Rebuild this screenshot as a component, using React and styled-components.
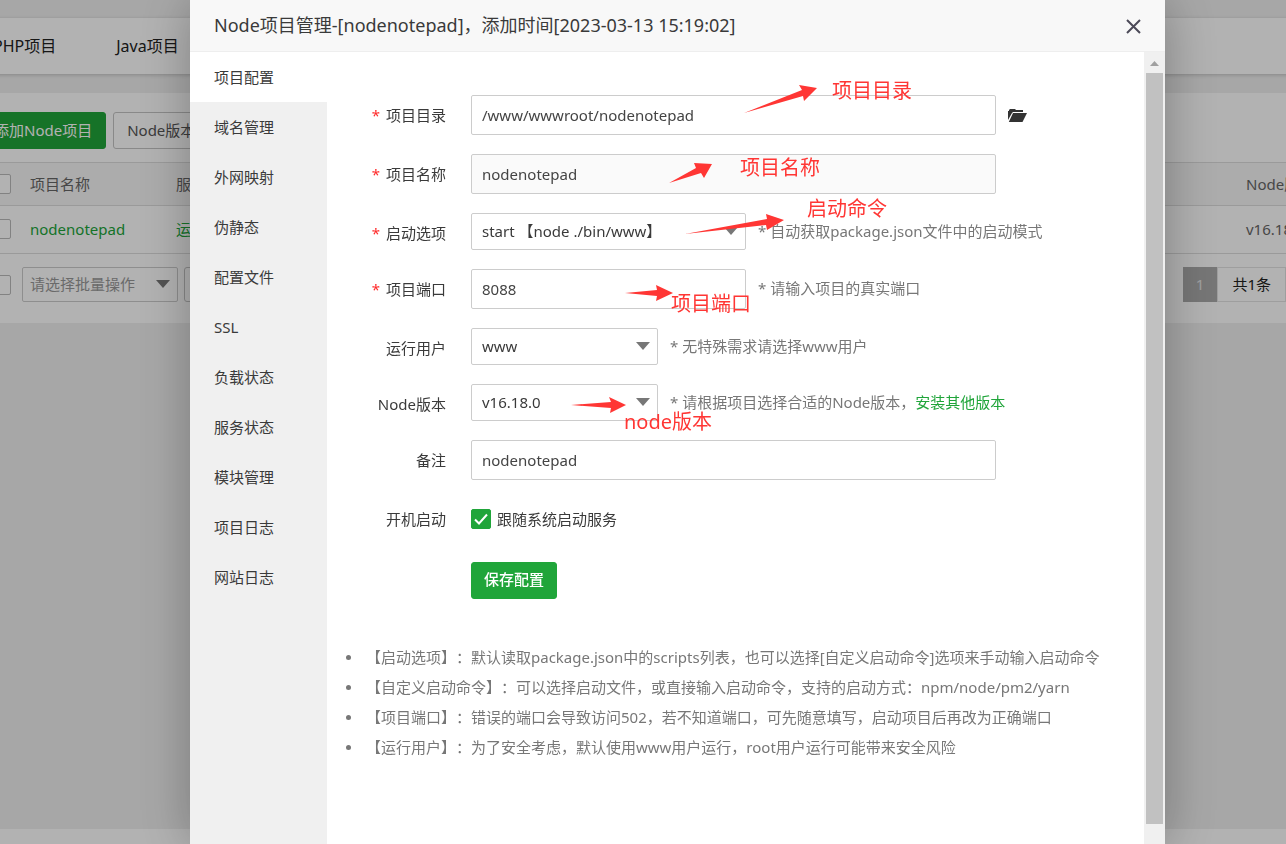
import React, { useState } from 'react';
import styled, { createGlobalStyle } from 'styled-components';

const GlobalStyle = createGlobalStyle`
    * {
        box-sizing: border-box;
    }
    body {
        margin: 0;
        background: #f0f0f0;
        font-family: "Noto Sans", "Noto Sans CJK SC", sans-serif;
        font-size: 15px;
        line-height: 20px;
        color: #3a3a3a;
        text-spacing-trim: space-all;
    }
    button, input, select {
        font: inherit;
        color: inherit;
    }
`;

/* ---------- page behind the dialog ---------- */

const Shell = styled.div`
    height: 100vh;
    overflow: hidden;
`;

const Page = styled.div`
    display: flex;
    flex-direction: column;
    height: 100%;
    margin: 0 -20px 0 -40px;
    padding-top: 18px;
`;

const Tabs = styled.nav`
    display: flex;
    flex-shrink: 0;
    align-items: center;
    gap: 60px;
    height: 56px;
    padding: 0 33px;
    background: #fff;
    box-shadow: 0 1px 4px rgba(0, 0, 0, .2);
    font-size: 16px;
    a {
        color: #222;
        text-decoration: none;
    }
`;

const Panel = styled.main`
    margin-top: 19px;
    padding: 19px 20px 21px;
    background: #fff;
`;

const Toolbar = styled.div`
    display: flex;
    gap: 7px;
    margin-bottom: 13px;
`;

const Button = styled.button`
    height: 37px;
    padding: 0 ${props => props.$strong ? 12 : 13}px 2px;
    border: 1px solid ${props => props.$primary ? '#20a53a' : '#c4c4c4'};
    border-radius: 3px;
    background: ${props => props.$primary ? '#20a53a' : '#fff'};
    color: ${props => props.$primary ? '#fff' : '#555'};
    font-weight: ${props => props.$strong ? 500 : 400};
    white-space: nowrap;
    cursor: pointer;
`;

const Table = styled.table`
    width: 100%;
    table-layout: fixed;
    border-collapse: collapse;
    color: #666;
    th, td {
        height: 48px;
        padding: 0 10px 2px;
        border-bottom: 1px solid #ddd;
        font-weight: 400;
        text-align: left;
        white-space: nowrap;
    }
    th {
        height: 43px;
        padding-bottom: 0;
        border-top: 1px solid #ddd;
        background: #f6f6f6;
    }
    a {
        color: #20a53a;
        text-decoration: none;
    }
`;

const Column = styled.col`
    width: ${props => props.$width};
`;

const PlainCheck = styled.input`
    display: block;
    appearance: none;
    width: 20px;
    height: 20px;
    margin: 0 1px;
    border: 1px solid #bbb;
    border-radius: 2px;
    background: #fff;
`;

const TableFooter = styled.div`
    display: flex;
    align-items: center;
    gap: 10px;
    margin-top: 13px;
    padding-left: 10px;
`;

const BatchActions = styled.div`
    display: flex;
    gap: 6px;
    color: #999;
    button {
        width: 64px;
        height: 35px;
    }
`;

const Pager = styled.div`
    display: flex;
    margin-left: auto;
    line-height: 33px;
    color: #222;
    span {
        padding: 0 14px;
        border: 1px solid #e2e2e2;
    }
    span:first-child {
        padding: 0 12px;
        border-color: #aaa;
        background: #aaa;
        color: #e4e4e4;
    }
`;

const PageFooter = styled.footer`
    flex-shrink: 0;
    height: 15px;
    margin-top: auto;
    background: #fff;
`;

/* ---------- dialog ---------- */

const Overlay = styled.div`
    position: fixed;
    inset: 0;
    display: flex;
    padding: 0 121px 0 190px;
    background: rgba(0, 0, 0, .3);
`;

const Dialog = styled.section`
    display: flex;
    flex: 1;
    flex-direction: column;
    min-width: 0;
    background: #fff;
    box-shadow: 1px 1px 50px rgba(0, 0, 0, .3);
`;

const DialogHeader = styled.header`
    display: flex;
    flex-shrink: 0;
    align-items: center;
    justify-content: space-between;
    height: 52px;
    padding: 0 24px;
    border-bottom: 1px solid #eee;
    background: #f8f8f8;
    h1 {
        margin: 0;
        padding-bottom: 2px;
        font-size: 18px;
        font-weight: 400;
    }
`;

const CloseButton = styled.button`
    display: flex;
    padding: 2px 0 0;
    border: 0;
    background: none;
    cursor: pointer;
`;

const DialogBody = styled.div`
    display: flex;
    flex: 1;
    min-height: 0;
`;

const Side = styled.nav`
    display: flex;
    flex-direction: column;
    flex-shrink: 0;
    width: 137px;
    background: #f0f0f0;
`;

const SideItem = styled.button`
    height: 50px;
    padding: 0 24px;
    border: 0;
    background: ${props => props.$active ? '#fff' : 'transparent'};
    text-align: left;
    cursor: pointer;
`;

const Content = styled.div`
    position: relative;
    flex: 1;
    min-width: 0;
    padding-top: 43px;
    overflow: hidden;
`;

const Form = styled.form`
    display: flex;
    flex-direction: column;
    gap: 19px;
`;

const Row = styled.div`
    display: flex;
    align-items: center;
    min-height: ${props => props.$height || 37}px;
    > label:first-child {
        align-self: flex-start;
        width: 119px;
        height: 37px;
        margin-right: 25px;
        line-height: 40px;
        text-align: right;
    }
`;

const Required = styled.span`
    margin-right: 6px;
    color: #ff2a2a;
`;

const Input = styled.input`
    width: ${props => props.$short ? 275 : 525}px;
    height: 40px;
    padding: 0 10px;
    border: 1px solid #ccc;
    border-radius: 2px;
    background: ${props => props.disabled ? '#fafafa' : '#fff'};
    color: #444;
    outline: none;
`;

const SelectBox = styled.div`
    position: relative;
    width: ${props => props.$width}px;
    height: ${props => props.$height || 37}px;
    select {
        appearance: none;
        width: 100%;
        height: 100%;
        padding: 0 ${props => props.$inset || 10}px 2px;
        border: 1px solid #ccc;
        border-radius: 2px;
        background: #fff;
        outline: none;
    }
    svg {
        position: absolute;
        top: 50%;
        right: 8px;
        margin-top: -5px;
        pointer-events: none;
    }
`;

const FolderButton = styled.button`
    display: flex;
    margin-left: 12px;
    padding: 0;
    border: 0;
    background: none;
    cursor: pointer;
`;

const Hint = styled.span`
    margin-left: 12px;
    padding-bottom: 2px;
    color: #777;
    white-space: nowrap;
    a {
        color: #20a53a;
        text-decoration: none;
    }
`;

const CheckLabel = styled.label`
    position: relative;
    display: flex;
    align-items: center;
    gap: 6px;
    input {
        appearance: none;
        width: 20px;
        height: 20px;
        margin: 0;
        border: 1px solid #20a53a;
        border-radius: 2px;
        background: #fff;
    }
    input:checked {
        background: #20a53a;
    }
    svg {
        position: absolute;
        top: 0;
        left: 0;
    }
`;

const Actions = styled.div`
    display: flex;
    align-items: center;
    height: 44px;
    padding-left: 144px;
`;

const Notes = styled.ul`
    margin: 40px 0 0;
    padding: 0 0 0 19px;
    color: #777;
    line-height: 30px;
    list-style: none;
    white-space: nowrap;
    li {
        display: flex;
        align-items: center;
        gap: 15px;
    }
    li::before {
        content: '';
        width: 5px;
        height: 5px;
        border-radius: 50%;
        background: #777;
    }
`;

const Scrollbar = styled.div`
    display: flex;
    flex-direction: column;
    align-items: center;
    flex-shrink: 0;
    width: 21px;
    padding-bottom: 20px;
    background: #f0f0f0;
    svg {
        flex-shrink: 0;
        margin: 9px 0 7px;
    }
`;

const Thumb = styled.div`
    flex: 1;
    width: 17px;
    background: #c1c1c1;
`;

/* ---------- red marks drawn over the form ---------- */

const Marks = styled.div`
    position: absolute;
    top: 0;
    left: 0;
    pointer-events: none;
`;

const Mark = styled.span`
    position: absolute;
    left: ${props => props.$x}px;
    top: ${props => props.$y}px;
    color: #ff3634;
    font-size: 20px;
    line-height: 28px;
    white-space: nowrap;
`;

const MENU = ['项目配置', '域名管理', '外网映射', '伪静态', '配置文件', 'SSL', '负载状态', '服务状态', '模块管理', '项目日志', '网站日志'];

// \uff0c and \uff1a are the full-width comma and colon
const TITLE = 'Node项目管理-[nodenotepad]\uff0c添加时间[2023-03-13 15:19:02]';

const NOTES = [
    '【启动选项】\uff1a默认读取package.json中的scripts列表\uff0c也可以选择[自定义启动命令]选项来手动输入启动命令',
    '【自定义启动命令】\uff1a可以选择启动文件\uff0c或直接输入启动命令\uff0c支持的启动方式\uff1anpm/node/pm2/yarn',
    '【项目端口】\uff1a错误的端口会导致访问502\uff0c若不知道端口\uff0c可先随意填写\uff0c启动项目后再改为正确端口',
    '【运行用户】\uff1a为了安全考虑\uff0c默认使用www用户运行\uff0croot用户运行可能带来安全风险',
];

const MARKS = [
    { text: '项目目录', x: 505, y: 25, arrow: '417,61 475,38 472,33 490,36 477,49 476,44' },
    { text: '项目名称', x: 413, y: 102, arrow: '342,131 369,116 367,111 385,112 377,126 374,121' },
    { text: '启动命令', x: 480, y: 143, arrow: '358,182 440,167 439,162 457,168 440,178 439,173' },
    { text: '项目端口', x: 344, y: 238, arrow: '298,241 330,238 329,233 346,241 329,249 330,244' },
    { text: 'node版本', x: 297, y: 356, arrow: '244,353 284,350 282,345 299,353 283,361 284,356' },
];

const Caret = () => (
    <svg width="14" height="8" viewBox="0 0 14 8" fill="#777"><path d="M0 0h14L7 8z" /></svg>
);

const Label = ({ id, required, children }) => (
    <label htmlFor={id}>
        {required && <Required>*</Required>}
        {children}
    </label>
);

const Select = ({ id, width, value }) => (
    <SelectBox $width={width}>
        <select id={id} defaultValue={value}>
            <option value={value}>{value}</option>
        </select>
        <Caret />
    </SelectBox>
);

const Background = () => (
    <Page>
        <Tabs>
            <a href="#php">PHP项目</a>
            <a href="#java">Java项目</a>
        </Tabs>
        <Panel>
            <Toolbar>
                <Button $primary>添加Node项目</Button>
                <Button>Node版本</Button>
            </Toolbar>
            <Table>
                <colgroup>
                    <Column $width="40px" />
                    <Column $width="146px" />
                    <Column $width="auto" />
                    <Column $width="50px" />
                </colgroup>
                <thead>
                    <tr>
                        <th><PlainCheck type="checkbox" aria-label="全选" /></th>
                        <th>项目名称</th>
                        <th>服务</th>
                        <th>Node版本</th>
                    </tr>
                </thead>
                <tbody>
                    <tr>
                        <td><PlainCheck type="checkbox" aria-label="nodenotepad" /></td>
                        <td><a href="#nodenotepad">nodenotepad</a></td>
                        <td><a href="#status">运行</a></td>
                        <td>v16.18.0</td>
                    </tr>
                </tbody>
            </Table>
            <TableFooter>
                <PlainCheck type="checkbox" aria-label="批量选择" />
                <BatchActions>
                    <SelectBox $width={156} $height={35} $inset={7}>
                        <select aria-label="批量操作">
                            <option>请选择批量操作</option>
                        </select>
                        <Caret />
                    </SelectBox>
                    <Button aria-label="执行" />
                </BatchActions>
                <Pager>
                    <span>1</span>
                    <span>共1条</span>
                </Pager>
            </TableFooter>
        </Panel>
        <PageFooter />
    </Page>
);

const ConfigForm = () => {
    const [autoStart, setAutoStart] = useState(true);

    return (
        <Form onSubmit={e => e.preventDefault()}>
            <Row>
                <Label id="path" required>项目目录</Label>
                <Input id="path" defaultValue="/www/wwwroot/nodenotepad" />
                <FolderButton type="button" aria-label="选择目录">
                    <svg width="19" height="15" viewBox="0 0 19 15" fill="#333">
                        <path d="M0 12V3h1V2l1-1h5l1 1h7v2H5L4 5z" />
                        <path d="M5 5h14l-4.500 9H.8z" />
                    </svg>
                </FolderButton>
            </Row>
            <Row>
                <Label id="name" required>项目名称</Label>
                <Input id="name" defaultValue="nodenotepad" disabled />
            </Row>
            <Row>
                <Label id="script" required>启动选项</Label>
                <Select id="script" width={275} value="start 【node ./bin/www】" />
                <Hint>* 自动获取package.json文件中的启动模式</Hint>
            </Row>
            <Row>
                <Label id="port" required>项目端口</Label>
                <Input id="port" defaultValue="8088" $short />
                <Hint>* 请输入项目的真实端口</Hint>
            </Row>
            <Row>
                <Label id="user">运行用户</Label>
                <Select id="user" width={187} value="www" />
                <Hint>* 无特殊需求请选择www用户</Hint>
            </Row>
            <Row>
                <Label id="version">Node版本</Label>
                <Select id="version" width={187} value="v16.18.0" />
                <Hint>{'* 请根据项目选择合适的Node版本\uff0c'}<a href="#install">安装其他版本</a></Hint>
            </Row>
            <Row>
                <Label id="remark">备注</Label>
                <Input id="remark" defaultValue="nodenotepad" />
            </Row>
            <Row $height={40}>
                <Label id="boot">开机启动</Label>
                <CheckLabel>
                    <input id="boot" type="checkbox" checked={autoStart} onChange={() => setAutoStart(!autoStart)} />
                    <svg width="20" height="20" viewBox="0 0 20 20" fill="none" stroke="#fff" strokeWidth="2">
                        <path d="M4 10.500l4 4L16 5.500" />
                    </svg>
                    跟随系统启动服务
                </CheckLabel>
            </Row>
            <Actions>
                <Button $primary $strong>保存配置</Button>
            </Actions>
        </Form>
    );
}

const App = () => {
    const [active, setActive] = useState('项目配置');

    return (
        <Shell>
            <GlobalStyle />
            <Background />
            <Overlay>
                <Dialog role="dialog" aria-labelledby="dialog-title">
                    <DialogHeader>
                        <h1 id="dialog-title">{TITLE}</h1>
                        <CloseButton aria-label="关闭">
                            <svg width="15" height="15" viewBox="0 0 15 15" stroke="#4c4a58" strokeWidth="2">
                                <path d="M1 1l13 13M14 1L1 14" />
                            </svg>
                        </CloseButton>
                    </DialogHeader>
                    <DialogBody>
                        <Side>
                            {MENU.map(item => (
                                <SideItem key={item} $active={item === active} onClick={() => setActive(item)}>
                                    {item}
                                </SideItem>
                            ))}
                        </Side>
                        <Content>
                            <ConfigForm />
                            <Notes>
                                {NOTES.map(note => <li key={note}>{note}</li>)}
                            </Notes>
                            <Marks>
                                <svg width="560" height="400" viewBox="0 0 560 400" fill="#ff3634">
                                    {MARKS.map(mark => <polygon key={mark.text} points={mark.arrow} />)}
                                </svg>
                                {MARKS.map(mark => (
                                    <Mark key={mark.text} $x={mark.x} $y={mark.y}>{mark.text}</Mark>
                                ))}
                            </Marks>
                        </Content>
                        <Scrollbar>
                            <svg width="9" height="5" viewBox="0 0 9 5" fill="#a0a0a0"><path d="M0 5h9L4.500 0z" /></svg>
                            <Thumb />
                        </Scrollbar>
                    </DialogBody>
                </Dialog>
            </Overlay>
        </Shell>
    );
}

export default App;
